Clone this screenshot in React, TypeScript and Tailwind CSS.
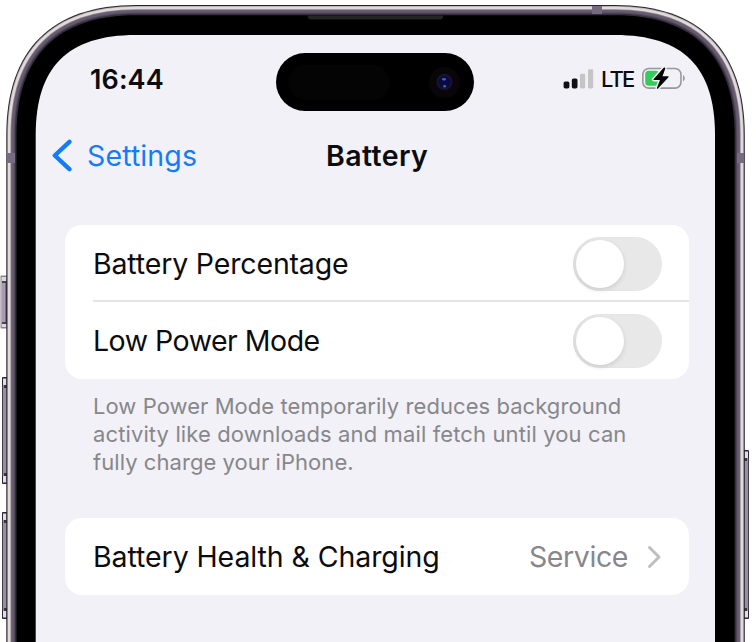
import React from "react";

// Rounded device outline that runs off the bottom edge of the viewport.
function shell(l: number, t: number, r: number, k: number, c: number) {
  return `M${l} 660V${t + k}C${l} ${t + c} ${l + c} ${t} ${l + k} ${t}H${r - k}C${r - c} ${t} ${r} ${t + c} ${r} ${t + k}V660Z`;
}

const layers: [number, string][] = [
  [0, "#2a2430"],
  [1, "#b0a8ae"],
  [1.7, "#e0dbd8"],
  [4.2, "#8d8490"],
  [5, "#665b70"],
  [7.6, "#51485c"],
  [8.7, "#332e38"],
  [10.2, "#000000"],
];

function SideButton({ x, y, h, flip }: { x: number; y: number; h: number; flip?: boolean }) {
  return (
    <g transform={flip ? `translate(${x + 7} ${y}) scale(-1 1)` : `translate(${x} ${y})`}>
      <rect width="7" height={h} rx="1" fill="#2d2733" />
      <rect x="1" y="1.5" width="3.5" height={h - 3} fill="#e2dde0" />
      <rect x="0.8" y="8" width="3.7" height={h - 16} fill="#94909f" />
      <rect x="2" y="8" width="3" height="3" fill="#3a3342" />
      <rect x="2" y={h - 11} width="3" height="3" fill="#3a3342" />
    </g>
  );
}

function DeviceFrame() {
  return (
    <svg className="absolute inset-0" width="756" height="642" viewBox="0 0 756 642">
      <rect x="0.5" y="275.5" width="7" height="53" rx="1" fill="#8b838c" />
      <rect x="1.5" y="277" width="5" height="50" fill="#ddd8dc" />
      <rect x="2" y="281" width="5" height="43" fill="#4d4357" />
      <rect x="2" y="283" width="3.5" height="39" fill="#a99bb2" />
      <SideButton x={2} y={377} h={107} />
      <SideButton x={2} y={512} h={107} />
      <SideButton x={742} y={450} h={169} flip />
      {layers.map(([i, fill]) => (
        <path key={i} fill={fill} d={shell(6.3 + i, 5 + i, 744.8 - i, 130 - i, 45 - i * 0.4)} />
      ))}
      <rect x="7" y="153" width="8" height="10" fill="#776b82" />
      <rect x="737" y="153" width="7" height="10" fill="#776b82" />
      <rect x="592" y="6" width="10" height="8" fill="#776b82" />
      <path d="M308 15.5H443V17Q443 19.5 439 19.5H312Q308 19.5 308 17Z" fill="#242424" />
      <path fill="#f2f1f7" d={shell(35.7, 35, 715, 100, 32)} />
    </svg>
  );
}

function Island() {
  return (
    <div className="flex h-[58px] w-[198px] items-center justify-between rounded-full bg-black pr-[14px] pl-3">
      <div className="h-[35px] w-[102px] rounded-full bg-[#040404]" />
      <svg width="31" height="31" viewBox="0 0 31 31">
        <circle cx="15.5" cy="15.5" r="15.5" fill="#090509" />
        <circle cx="15.5" cy="15" r="8.2" fill="#15152b" />
        <circle cx="15.5" cy="15" r="6" fill="#090a45" />
        <ellipse cx="15" cy="12.3" rx="2" ry="1.3" fill="#5457bd" />
        <ellipse cx="15.6" cy="19.3" rx="1.5" ry="1.2" fill="#267b91" />
      </svg>
    </div>
  );
}

function StatusIcons() {
  return (
    <div className="flex h-[22px] w-[123px] items-center">
      <svg className="shrink-0" width="31" height="22" viewBox="0 0 31 22">
        <rect x="0.6" y="13.4" width="5.8" height="7" rx="1.7" fill="#111114" />
        <rect x="8.8" y="10.4" width="5.7" height="10" rx="1.7" fill="#111114" />
        <rect x="17" y="5.7" width="5.2" height="14.7" rx="1.3" fill="#c5c5c8" />
        <rect x="25" y="1.2" width="5.2" height="19.2" rx="1.3" fill="#c5c5c8" />
      </svg>
      <span className="ml-[7px] w-[33px] text-[22px] leading-[22px] font-medium tracking-[-1.9px] text-[#0c0c0e]">
        LTE
      </span>
      <svg className="ml-[6.5px] shrink-0" width="45" height="24" viewBox="0 0 45 24">
        <rect x="1.8" y="1.5" width="38.2" height="19.6" rx="6" fill="none" stroke="#98989c" strokeWidth="1.6" />
        <rect x="4.2" y="3.8" width="14" height="15" rx="3.5" fill="#34cd5b" />
        <path d="M42.2 7.8Q45.2 11.2 42.2 14.6Z" fill="#88888c" />
        <path
          d="M22.7 0.8L12.5 12.2Q12 12.9 13 12.9H19L15.9 21.1Q15.8 22.4 17 21.6L27.5 10.2Q28 9.3 27 9.3H21.5L24.3 1.6Q24.2 0 22.7 0.8Z"
          fill="#000"
          stroke="#f2f1f7"
          strokeWidth="3"
          paintOrder="stroke"
        />
      </svg>
    </div>
  );
}

function Toggle() {
  return (
    <div className="flex h-[54px] w-[89px] items-center rounded-full bg-[#e8e8e9] px-[3px] shadow-[inset_1px_0_2px_rgba(0,0,0,0.06)]">
      <div className="size-12 rounded-full bg-white shadow-[0_2px_5px_rgba(0,0,0,0.12)]" />
    </div>
  );
}

export default function App() {
  return (
    <div className="relative h-[642px] w-[756px] overflow-hidden bg-white font-['Inter',sans-serif] text-[#0c0c0e]">
      <DeviceFrame />
      <div className="relative px-[65px] pt-[53px]">
        <header className="flex h-[58px] items-start">
          <div className="w-[211px] pt-[12px] pl-[25px] text-[27px] leading-[30px] font-semibold tracking-[0.1px]">
            16:44
          </div>
          <Island />
          <div className="pt-[15px] pl-[89px]">
            <StatusIcons />
          </div>
        </header>

        <nav className="mt-[25px] flex h-10 items-center">
          <div className="-ml-[13px] flex w-[274px] items-center text-[#147cf8]">
            <svg width="20" height="34" viewBox="0 0 20 34">
              <path
                d="M17.4 2.8L2.8 16.5L17.4 30.2"
                fill="none"
                stroke="currentColor"
                strokeWidth="4.4"
                strokeLinecap="round"
                strokeLinejoin="round"
              />
            </svg>
            <span className="ml-[15px] text-[28.5px] tracking-[0.12px]">Settings</span>
          </div>
          <h1 className="text-[28.5px] font-semibold tracking-[0.4px]">Battery</h1>
        </nav>

        <main className="mt-[49px] w-[624px] text-[28.5px]">
          <section className="rounded-[17px] bg-white pl-[28px]">
            <div className="flex h-[77px] items-center justify-between border-b-2 border-[#e4e4e6] pt-[3px] pr-[27px]">
              <span className="pt-px tracking-[-0.16px]">Battery Percentage</span>
              <Toggle />
            </div>
            <div className="flex h-[77px] items-center justify-between pr-[27px]">
              <span className="pt-[2px] tracking-[-0.5px]">Low Power Mode</span>
              <Toggle />
            </div>
          </section>
          <p className="mt-[13px] pl-[28px] text-[22px] leading-[28px] whitespace-nowrap text-[#87878b]">
            <span className="tracking-[0.06px]">Low Power Mode temporarily reduces background</span>
            <br />
            <span className="tracking-[0.12px]">activity like downloads and mail fetch until you can</span>
            <br />
            <span className="tracking-[0.06px]">fully charge your iPhone.</span>
          </p>
          <section className="mt-[42px] flex h-[77px] items-center rounded-[17px] bg-white pr-[27px] pl-[28px]">
            <span className="flex-1 pt-[2px] tracking-[-0.08px]">Battery Health &amp; Charging</span>
            <span className="pt-[2px] tracking-[-0.4px] text-[#87878b]">Service</span>
            <svg className="ml-[18px]" width="16" height="24" viewBox="0 0 16 24">
              <path
                d="M3.5 2.5L13 12L3.5 21.5"
                fill="none"
                stroke="#bfbfc2"
                strokeWidth="3"
                strokeLinecap="round"
                strokeLinejoin="round"
              />
            </svg>
          </section>
        </main>
      </div>
    </div>
  );
}
